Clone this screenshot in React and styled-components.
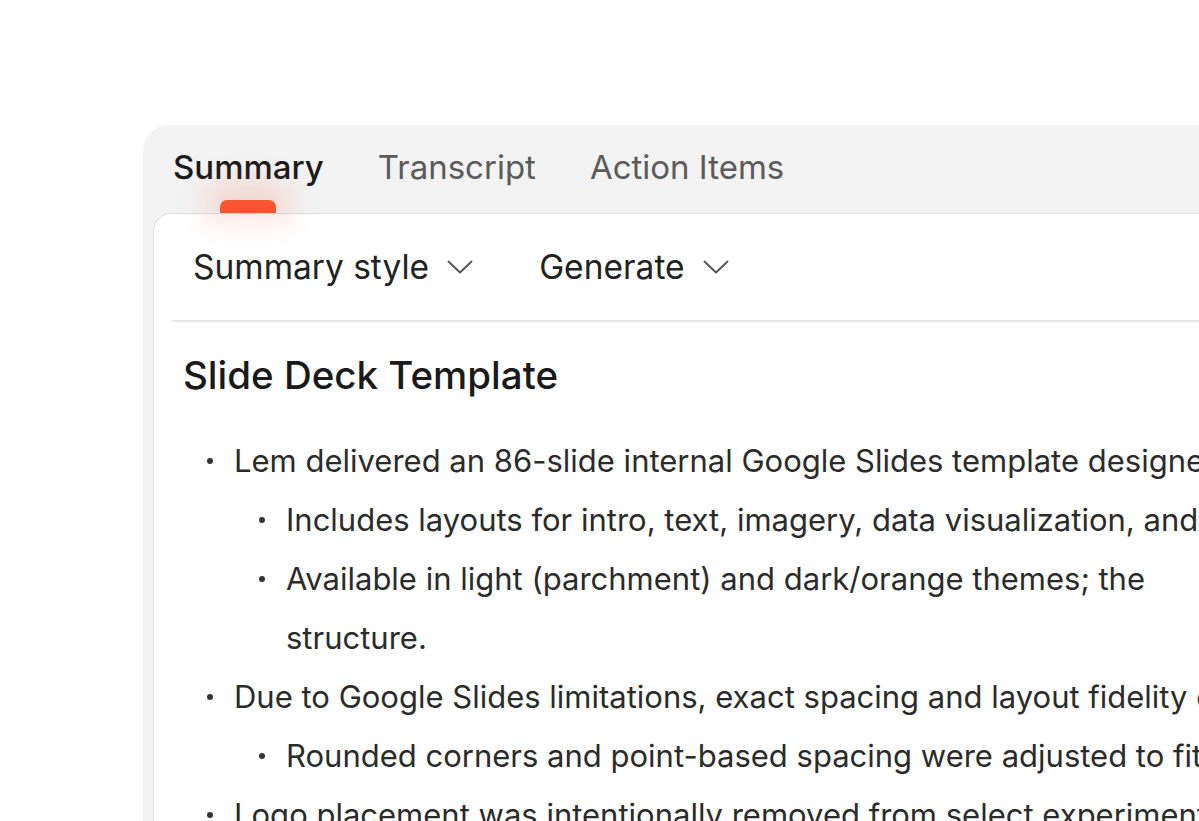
import React from 'react';
import styled, { createGlobalStyle } from 'styled-components';

const GlobalStyle = createGlobalStyle`
  html, body {
    margin: 0;
    background: #ffffff;
    overflow: hidden;
  }
  body {
    font-family: Inter, "Noto Sans", sans-serif;
    -webkit-font-smoothing: antialiased;
  }
`;

const Page = styled.div`
  padding: 125px 0 0 143px;
  height: 821px;
  box-sizing: border-box;
`;

const Panel = styled.section`
  width: 1200px;
  height: 900px;
  background: #f3f3f3;
  border-top-left-radius: 26px;
  padding: 0 0 0 10px;
  box-sizing: border-box;
`;

const Tabs = styled.nav`
  display: flex;
  gap: 54px;
  padding: 22px 0 0 20px;
  height: 88px;
  box-sizing: border-box;
`;

const Tab = styled.button`
  position: relative;
  z-index: 1;
  border: 0;
  background: none;
  padding: 0;
  height: 66px;
  display: flex;
  align-items: flex-start;
  font-family: inherit;
  font-size: 33px;
  line-height: 40px;
  font-weight: ${(p) => (p.$active ? 500 : 400)};
  color: ${(p) => (p.$active ? '#1b1b1b' : '#5b5b5b')};
  cursor: pointer;
`;

// orange marker with its soft glow, sitting on the card edge
const Marker = styled.span`
  position: absolute;
  left: 50%;
  bottom: 0;
  width: 56px;
  height: 13px;
  margin-left: -28px;
  border-radius: 7px 7px 0 0;
  background: #fb5431;
  box-shadow: 0 -6px 28px 14px rgba(251, 84, 49, 0.17);
`;

const Card = styled.div`
  background: #ffffff;
  border: 1.5px solid #dedede;
  border-right: 0;
  border-bottom: 0;
  border-top-left-radius: 18px;
  padding: 0 0 0 18px;
  height: 100%;
`;

const Toolbar = styled.div`
  display: flex;
  gap: 66px;
  align-items: center;
  height: 106px;
  padding-left: 21px;
  border-bottom: 2px solid #e6e6e6;
`;

const Dropdown = styled.button`
  display: flex;
  align-items: center;
  gap: 18px;
  border: 0;
  background: none;
  padding: 0;
  font-family: inherit;
  font-size: 33.5px;
  color: #222222;
  cursor: pointer;
  svg {
    color: #555555;
  }
`;

const Body = styled.article`
  padding: 27px 0 0 11px;
  color: #2b2b2b;
`;

const Heading = styled.h2`
  margin: 0 0 30px;
  font-size: 38.5px;
  line-height: 52px;
  font-weight: 500;
  color: #1a1a1a;
`;

const List = styled.ul`
  list-style: none;
  margin: 0;
  padding: 0 0 0 ${(p) => (p.$nested ? 52 : 51)}px;
  font-size: 31px;
  line-height: 59px;
  white-space: nowrap;
`;

const Item = styled.li`
  position: relative;
  &::before {
    content: '';
    position: absolute;
    left: -27px;
    top: 27px;
    width: 6px;
    height: 6px;
    border-radius: 50%;
    background: #333333;
  }
`;

const Chevron = () => (
  <svg width="26" height="16" viewBox="0 0 26 16" fill="none">
    <path d="M1.5 2.5 L13 13.5 L24.5 2.5" stroke="currentColor" strokeWidth="1.9" strokeLinecap="round" strokeLinejoin="round" />
  </svg>
);

const tabs = ['Summary', 'Transcript', 'Action Items'];

export default function App() {
  return (
    <Page>
      <GlobalStyle />
      <Panel>
        <Tabs>
          {tabs.map((t, i) => (
            <Tab key={t} $active={i === 0}>
              {t}
              {i === 0 && <Marker />}
            </Tab>
          ))}
        </Tabs>
        <Card>
          <Toolbar>
            <Dropdown>
              Summary style <Chevron />
            </Dropdown>
            <Dropdown>
              Generate <Chevron />
            </Dropdown>
          </Toolbar>
          <Body>
            <Heading>Slide Deck Template</Heading>
            <List>
              <Item>
                Lem delivered an 86-slide internal Google Slides template designed for company presentations.
                <List $nested>
                  <Item>Includes layouts for intro, text, imagery, data visualization, and closing slides.</Item>
                  <Item>
                    Available in light (parchment) and dark/orange themes; the
                    <br />
                    structure.
                  </Item>
                </List>
              </Item>
              <Item>
                Due to Google Slides limitations, exact spacing and layout fidelity could not be preserved.
                <List $nested>
                  <Item>Rounded corners and point-based spacing were adjusted to fit.</Item>
                </List>
              </Item>
              <Item>Logo placement was intentionally removed from select experimental layouts.</Item>
            </List>
          </Body>
        </Card>
      </Panel>
    </Page>
  );
}
